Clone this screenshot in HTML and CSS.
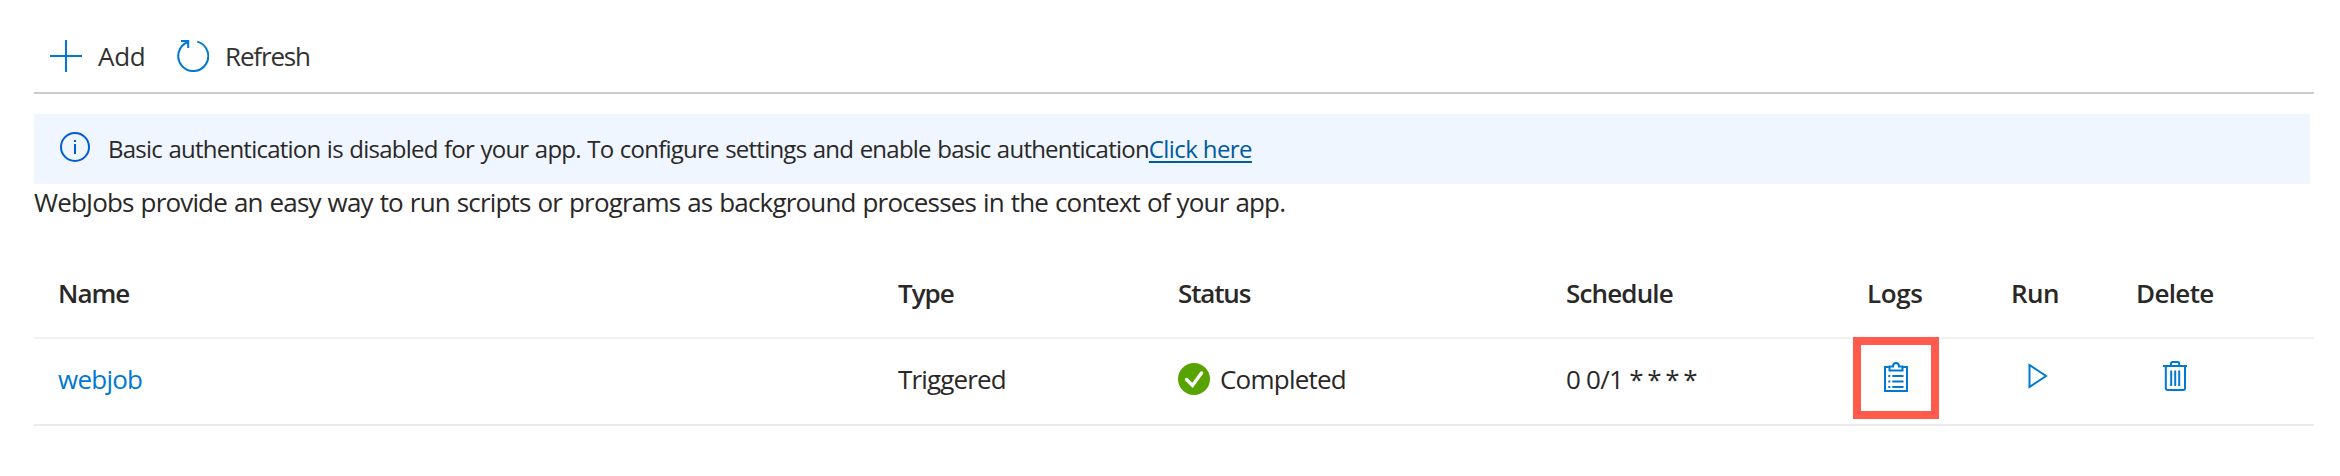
FILE: index.html
```html
<!DOCTYPE html>
<html lang="en">
<head>
<meta charset="utf-8">
<title>WebJobs</title>
<link rel="stylesheet" href="styles.css">
</head>
<body>
<div class="toolbar">
  <button class="command add">
    <svg class="icon32" viewBox="0 0 32 32"><path d="M16 0V32M0 16H32"/></svg>
    <span class="t-add">Add</span>
  </button>
  <button class="command refresh">
    <svg class="icon32" viewBox="0 0 32 32"><path d="M20.3 1.6A15 15 0 1 1 11 2M4 1H11.2V8"/></svg>
    <span class="t-refresh">Refresh</span>
  </button>
</div>
<div class="banner">
  <svg class="info" viewBox="0 0 30 30"><circle cx="15" cy="15" r="14"/><path d="M15 12V22M15 8V10"/></svg>
  <p class="banner-text"><span class="t-banner">Basic authentication is disabled for your app. To configure settings and enable basic authentication</span><a class="t-link" href="#">Click here</a></p>
</div>
<p class="intro">WebJobs provide an easy way to run scripts or programs as background processes in the context of your app.</p>
<div class="table">
  <div class="row head">
    <span class="t-name">Name</span>
    <span class="t-type">Type</span>
    <span class="t-status">Status</span>
    <span class="t-schedule">Schedule</span>
    <span class="t-logs">Logs</span>
    <span class="t-run">Run</span>
    <span class="t-delete">Delete</span>
  </div>
  <div class="row item">
    <a class="job" href="#">webjob</a>
    <span class="t-triggered">Triggered</span>
    <span class="status">
      <svg class="check" viewBox="0 0 32 32"><circle cx="16" cy="16" r="16"/><path d="M8.5 16.5L14.5 22.5L23.5 10"/></svg>
      <span class="t-completed">Completed</span>
    </span>
    <span class="t-cron">0 0/1 <span class="t-stars">* * * *</span></span>
    <span class="cell logs">
      <svg class="clipboard" viewBox="0 0 24 30"><path d="M5 5H1V29H23V5H19M5.5 4.5V8.5H18.5V4.5H15C15 2.3 13.7 1 12 1S9 2.3 9 4.5ZM8.3 14H19.5M8.3 19.5H19.5M8.3 25H19.5M4.3 14H6.3M4.3 19.5H6.3M4.3 25H6.3"/></svg>
      <span class="highlight"></span>
    </span>
    <span class="cell run"><svg class="play" viewBox="0 0 20 26"><path d="M1.5 2L18 13L1.5 24Z"/></svg></span>
    <span class="cell delete"><svg class="trash" viewBox="0 0 24 30"><path d="M0 5H24M2.8 5V27Q2.8 29 4.8 29H20.2Q22 29 22 27V5M8 5V2.6Q8 1 9.6 1H14.6Q16.2 1 16.2 2.6V5M8.2 9.5V25M12.2 9.5V25M16.2 9.5V25"/></svg></span>
  </div>
</div>
</body>
</html>
```
FILE: styles.css
```css
* { box-sizing: border-box; }
body {
  margin: 0;
  padding: 20px 26px 0 34px;
  background: #fff;
  color: #292827;
  font: 26px/36px "Open Sans", "Noto Sans", sans-serif;
}
p { margin: 0; }
svg { display: block; flex: none; fill: none; stroke: #0078d4; stroke-width: 2; }
.toolbar {
  display: flex;
  align-items: center;
  height: 74px;
  padding-left: 16px;
  border-bottom: 2px solid #ccc;
}
.command {
  display: flex;
  align-items: center;
  gap: 16px;
  padding: 0;
  border: 0;
  background: none;
  color: #323130;
  font: inherit;
}
.add { width: 127px; }
.icon32 { width: 32px; height: 32px; }
.t-add { letter-spacing: -0.3px; }
.t-refresh { letter-spacing: -1.15px; }
.banner {
  display: flex;
  align-items: center;
  gap: 18px;
  height: 70px;
  margin: 20px 4px 0 0;
  padding-left: 26px;
  background: #eff6ff;
  font-size: 24px;
}
.info { width: 30px; height: 30px; margin-bottom: 4px; stroke: #015cda; }
.banner-text { display: flex; white-space: nowrap; }
.t-banner { letter-spacing: -0.77px; word-spacing: 1px; }
.t-link {
  color: #005a9e;
  letter-spacing: -0.6px;
  text-decoration: underline;
  text-underline-offset: 3px;
  text-decoration-thickness: 2px;
}
.intro { white-space: nowrap; letter-spacing: -0.83px; word-spacing: 1px; }
.table { margin-top: 29px; }
.row {
  display: grid;
  grid-template-columns: 840px 280px 388px 301px 144px 125px 1fr;
  align-items: center;
  padding-left: 24px;
  white-space: nowrap;
}
.head { height: 90px; border-bottom: 2px solid #f1f1f1; font-weight: 600; }
.item { height: 87px; padding-bottom: 6px; border-bottom: 2px solid #eaeaea; }
.t-name { letter-spacing: -0.98px; }
.t-type { letter-spacing: -1px; }
.t-status { letter-spacing: -1.15px; }
.t-schedule { letter-spacing: -0.85px; }
.t-logs { letter-spacing: -0.4px; }
.t-run { letter-spacing: -0.5px; }
.t-delete { letter-spacing: -0.65px; }
.job { color: #0078d4; text-decoration: none; letter-spacing: -0.75px; }
.t-triggered { letter-spacing: -0.85px; }
.t-completed { letter-spacing: -0.78px; }
.t-cron { letter-spacing: -0.75px; }
.t-stars { letter-spacing: -1.5px; }
.status { display: flex; align-items: center; gap: 10px; }
.check { width: 32px; height: 32px; fill: #57a300; stroke: none; }
.check path { fill: none; stroke: #fff; stroke-width: 3.4; stroke-linecap: round; }
.cell { display: flex; align-items: center; align-self: stretch; position: relative; }
.clipboard { width: 24px; height: 30px; margin: 0 0 3px 17px; }
.play { width: 20px; height: 26px; margin: 0 0 5px 17px; }
.trash { width: 24px; height: 30px; margin: 0 0 5px 27px; }
.highlight {
  position: absolute;
  left: -14px;
  top: -2px;
  width: 86px;
  height: 82px;
  border: 8px solid #ff5a4c;
}
```
